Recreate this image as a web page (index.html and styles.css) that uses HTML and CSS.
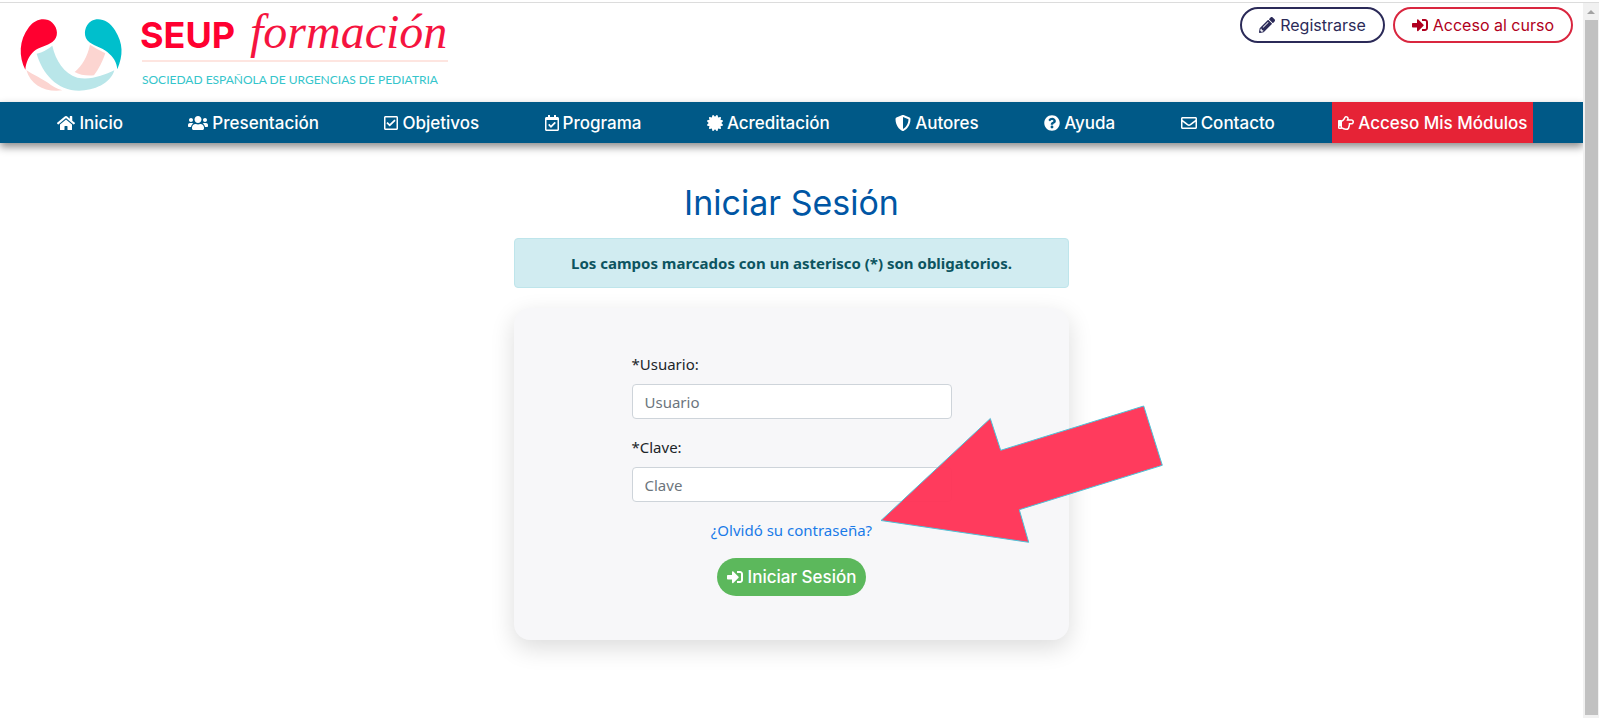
FILE: index.html
```html
<!DOCTYPE html>
<html lang="es">
<head>
<meta charset="utf-8">
<title>SEUP formación - Iniciar Sesión</title>
<meta name="viewport" content="width=device-width, initial-scale=1">
<link rel="stylesheet" href="styles.css">
</head>
<body>
<svg class="sprite" aria-hidden="true">
  <symbol id="pencil" viewBox="0 0 512 512"><path d="M497.9 142.1l-46.1 46.1c-4.7 4.7-12.3 4.7-17 0l-111-111c-4.7-4.7-4.7-12.3 0-17l46.1-46.1c18.7-18.7 49.1-18.7 67.9 0l60.1 60.1c18.8 18.7 18.8 49.1 0 67.9zM284.2 99.8L21.6 362.4.4 483.9c-2.9 16.4 11.4 30.6 27.8 27.8l121.5-21.3 262.6-262.6c4.7-4.7 4.7-12.3 0-17l-111-111c-4.8-4.7-12.4-4.7-17.1 0zM124.1 339.9c-5.5-5.5-5.5-14.3 0-19.8l154-154c5.5-5.5 14.3-5.5 19.8 0s5.5 14.3 0 19.8l-154 154c-5.5 5.5-14.3 5.5-19.8 0zM88 424h48v36.3l-64.5 11.3-31.1-31.1L51.7 376H88v48z"/></symbol>
  <symbol id="signin" viewBox="0 0 512 512"><path d="M416 448h-84c-6.600 0-12-5.400-12-12v-40c0-6.600 5.400-12 12-12h84c17.700 0 32-14.300 32-32V160c0-17.700-14.300-32-32-32h-84c-6.600 0-12-5.400-12-12V76c0-6.600 5.400-12 12-12h84c53 0 96 43 96 96v192c0 53-43 96-96 96zm-47-201L201 79c-15-15-41-4.500-41 17v96H24c-13.300 0-24 10.700-24 24v96c0 13.300 10.700 24 24 24h136v96c0 21.500 26 32 41 17l168-168c9.300-9.400 9.300-24.600 0-34z"/></symbol>
  <symbol id="home" viewBox="0 0 576 512"><path d="M280.37 148.26L96 300.11V464a16 16 0 0 0 16 16l112.06-.29a16 16 0 0 0 15.92-16V368a16 16 0 0 1 16-16h64a16 16 0 0 1 16 16v95.64a16 16 0 0 0 16 16.05L464 480a16 16 0 0 0 16-16V300L295.67 148.26a12.19 12.19 0 0 0-15.3 0zM571.6 251.47L488 182.56V44.05a12 12 0 0 0-12-12h-56a12 12 0 0 0-12 12v72.61L318.47 43a48 48 0 0 0-61 0L4.34 251.47a12 12 0 0 0-1.6 16.9l25.5 31A12 12 0 0 0 45.15 301l235.22-193.74a12.19 12.19 0 0 1 15.3 0L530.9 301a12 12 0 0 0 16.9-1.6l25.5-31a12 12 0 0 0-1.7-16.93z"/></symbol>
  <symbol id="users" viewBox="0 0 640 512"><path d="M96 224c35.3 0 64-28.7 64-64s-28.7-64-64-64-64 28.7-64 64 28.7 64 64 64zm448 0c35.3 0 64-28.7 64-64s-28.7-64-64-64-64 28.7-64 64 28.7 64 64 64zm32 32h-64c-17.6 0-33.500 7.100-45.100 18.600 40.300 22.100 68.900 62 75.100 109.400h66c17.700 0 32-14.300 32-32v-32c0-35.300-28.700-64-64-64zm-256 0c61.900 0 112-50.100 112-112S381.900 32 320 32 208 82.100 208 144s50.100 112 112 112zm76.800 32h-8.300c-20.800 10-43.900 16-68.500 16s-47.600-6-68.500-16h-8.300C179.600 288 128 339.600 128 403.200V432c0 26.500 21.500 48 48 48h288c26.500 0 48-21.500 48-48v-28.800c0-63.600-51.600-115.200-115.200-115.200zm-223.700-13.400C161.500 263.100 145.600 256 128 256H64c-35.300 0-64 28.700-64 64v32c0 17.700 14.300 32 32 32h65.900c6.300-47.400 34.900-87.300 75.200-109.400z"/></symbol>
  <symbol id="check" viewBox="0 0 448 512"><path d="M400 32H48C21.490 32 0 53.490 0 80v352c0 26.510 21.490 48 48 48h352c26.510 0 48-21.490 48-48V80c0-26.510-21.490-48-48-48zm0 400H48V80h352v352zm-35.864-241.724L191.547 361.480c-4.705 4.667-12.303 4.637-16.970-.068l-90.781-91.516c-4.667-4.705-4.637-12.303.069-16.971l22.719-22.536c4.705-4.667 12.303-4.637 16.970.069l59.792 60.277 141.352-140.216c4.705-4.667 12.303-4.637 16.970.068l22.536 22.718c4.667 4.706 4.637 12.304-.068 16.971z"/></symbol>
  <symbol id="calendar" viewBox="0 0 448 512"><path d="M400 64h-48V12c0-6.627-5.373-12-12-12h-40c-6.627 0-12 5.373-12 12v52H160V12c0-6.627-5.373-12-12-12h-40c-6.627 0-12 5.373-12 12v52H48C21.490 64 0 85.490 0 112v352c0 26.510 21.490 48 48 48h352c26.510 0 48-21.490 48-48V112c0-26.510-21.490-48-48-48zm-6 400H54a6 6 0 0 1-6-6V160h352v298a6 6 0 0 1-6 6zm-52.849-200.650L198.842 404.519c-4.705 4.667-12.303 4.637-16.971-.068l-75.091-75.699c-4.667-4.705-4.637-12.303.068-16.971l22.719-22.536c4.705-4.667 12.303-4.637 16.970.069l44.104 44.461 111.072-110.181c4.705-4.667 12.303-4.637 16.971.068l22.536 22.718c4.667 4.705 4.636 12.303-.069 16.970z"/></symbol>
  <symbol id="certificate" viewBox="0 0 512 512"><path d="M458.622 255.920l45.985-45.005c13.708-12.977 7.316-36.039-10.664-40.339l-62.650-15.990 17.661-62.015c4.991-17.838-11.829-34.663-29.661-29.671l-61.994 17.667-15.984-62.671C337.085.197 313.765-6.276 300.990 7.228L256 53.570 211.011 7.229c-12.630-13.351-36.047-7.234-40.325 10.668l-15.984 62.671-61.995-17.667C74.870 57.907 58.056 74.738 63.046 92.572l17.661 62.015-62.650 15.990C.069 174.878-6.310 197.944 7.392 210.915l45.985 45.005-45.985 45.004c-13.708 12.977-7.316 36.039 10.664 40.339l62.650 15.990-17.661 62.015c-4.991 17.838 11.829 34.663 29.661 29.671l61.994-17.667 15.984 62.671c4.439 18.575 27.696 24.018 40.325 10.668L256 458.610l44.989 46.001c12.500 13.488 35.987 7.486 40.325-10.668l15.984-62.671 61.994 17.667c17.836 4.994 34.651-11.837 29.661-29.671l-17.661-62.015 62.650-15.990c17.987-4.302 24.366-27.367 10.664-40.339l-45.984-45.004z"/></symbol>
  <symbol id="shield" viewBox="0 0 512 512"><path d="M466.500 83.700l-192-80a48.150 48.150 0 0 0-36.900 0l-192 80C27.700 91.100 16 108.600 16 128c0 198.500 114.500 335.700 221.500 380.300 11.800 4.900 25.100 4.900 36.900 0C360.100 472.600 496 349.300 496 128c0-19.400-11.700-36.900-29.500-44.300zM256.100 446.300l-.1-381 175.900 73.300c-3.300 151.400-82.100 261.100-175.800 307.700z"/></symbol>
  <symbol id="question" viewBox="0 0 512 512"><path d="M504 256c0 136.997-111.043 248-248 248S8 392.997 8 256C8 119.083 119.043 8 256 8s248 111.083 248 248zM262.655 90c-54.497 0-89.255 22.957-116.549 63.758-3.536 5.286-2.353 12.415 2.715 16.258l34.699 26.310c5.205 3.947 12.621 3.008 16.665-2.122 17.864-22.658 30.113-35.797 57.303-35.797 20.429 0 45.698 13.148 45.698 32.958 0 14.976-12.363 22.667-32.534 33.976C247.128 238.528 216 254.941 216 296v4c0 6.627 5.373 12 12 12h56c6.627 0 12-5.373 12-12v-1.333c0-28.462 83.186-29.647 83.186-106.667 0-58.002-60.165-102-116.531-102zM256 338c-25.365 0-46 20.635-46 46 0 25.364 20.635 46 46 46s46-20.636 46-46c0-25.365-20.635-46-46-46z"/></symbol>
  <symbol id="envelope" viewBox="0 0 512 512"><path d="M464 64H48C21.490 64 0 85.490 0 112v288c0 26.510 21.490 48 48 48h416c26.510 0 48-21.490 48-48V112c0-26.510-21.490-48-48-48zm0 48v40.805c-22.422 18.259-58.168 46.651-134.587 106.490-16.841 13.247-50.201 45.072-73.413 44.701-23.208.375-56.579-31.459-73.413-44.701C106.180 199.465 70.425 171.067 48 152.805V112h416zM48 400V214.398c22.914 18.251 55.409 43.862 104.938 82.646 21.857 17.205 60.134 55.186 103.062 54.955 42.717.231 80.509-37.199 103.053-54.947 49.528-38.783 82.032-64.401 104.947-82.653V400H48z"/></symbol>
  <symbol id="hand" viewBox="0 0 512 512"><path d="M428.800 137.600h-86.177a115.520 115.520 0 0 0 2.176-22.400c0-47.914-35.072-83.200-92-83.200-45.314 0-57.002 48.537-75.707 78.784-7.735 12.413-16.994 23.317-25.851 33.253l-.131.146-.129.148C135.662 161.807 127.764 168 120.800 168h-2.679c-5.747-4.952-13.536-8-22.120-8H32c-17.673 0-32 12.894-32 28.800v230.400C0 435.106 14.327 448 32 448h64c8.584 0 16.373-3.048 22.120-8h2.679c28.688 0 67.137 40 127.200 40h21.299c62.542 0 98.800-38.658 99.940-91.145 12.482-17.813 18.491-40.785 15.985-62.791A93.148 93.148 0 0 0 393.152 304H428.800c45.435 0 83.200-37.584 83.200-83.200 0-45.099-38.101-83.200-83.200-83.200zm0 118.400h-91.026c12.837 14.669 14.415 42.825-4.950 61.050 11.227 19.646 1.687 45.624-12.925 53.625 6.524 39.128-10.076 61.325-50.600 61.325H248c-45.491 0-77.210-35.913-120-39.676V215.571c25.239-2.964 42.966-21.222 59.075-39.596 11.275-12.650 21.725-25.300 30.799-39.875C232.355 112.712 244.006 80 252.800 80c23.375 0 44 8.800 44 35.200 0 35.200-26.400 53.075-26.400 70.400h158.400c18.425 0 35.200 16.500 35.200 35.200 0 18.975-16.225 35.200-35.200 35.200zM88 384c0 13.255-10.745 24-24 24s-24-10.745-24-24 10.745-24 24-24 24 10.745 24 24z"/></symbol>
</svg>
<div class="page">
  <header class="header">
    <a class="logo" href="#" aria-label="SEUP formación">
      <svg width="456" height="84" viewBox="14 10 456 84">
        <g transform="translate(14 12) scale(.3333)">
          <path fill="#fcd5d1" d="M228 98Q250 112 274 124C265 150 255 170 240 190Q205 193 182 180C205 160 220 135 228 98Z"/>
          <path fill="#fcd5d1" d="M37 174C60 190 85 200 103 213Q120 228 145 235C95 242 50 220 37 174Z"/>
          <path fill="#b9e6e9" d="M68 125Q95 118 115 101C125 145 150 185 190 197C230 205 270 190 301 175C290 215 240 236 195 236C130 236 85 185 68 125Z"/>
          <path fill="#ff0030" d="M34 173C14 135 14 85 45 45C65 20 95 15 115 32C132 48 135 75 115 90C100 102 75 105 60 118C45 132 36 150 34 173Z"/>
          <path fill="#00bfcc" d="M310 172C308 150 298 135 280 120C265 107 235 102 220 85C207 68 212 40 232 27C255 15 285 25 303 55C328 95 328 130 310 172Z"/>
        </g>
        <path fill="none" stroke="#fccbc1" d="M142 61H448"/>
        <text class="logo-name" x="140" y="48">SEUP</text>
        <text class="logo-script" x="250" y="48">formación</text>
        <text class="logo-sub" x="142" y="84">SOCIEDAD ESPAÑOLA DE URGENCIAS DE PEDIATRIA</text>
      </svg>
    </a>
    <div class="actions">
      <a class="pill pill-navy" href="#"><svg class="icon"><use href="#pencil"/></svg>Registrarse</a>
      <a class="pill pill-red" href="#"><svg class="icon"><use href="#signin"/></svg>Acceso al curso</a>
    </div>
  </header>
  <nav class="nav">
    <a href="#"><svg class="icon icon-home"><use href="#home"/></svg>Inicio</a>
    <a href="#"><svg class="icon icon-wide"><use href="#users"/></svg>Presentación</a>
    <a href="#"><svg class="icon icon-narrow"><use href="#check"/></svg>Objetivos</a>
    <a href="#"><svg class="icon icon-narrow"><use href="#calendar"/></svg>Programa</a>
    <a href="#"><svg class="icon"><use href="#certificate"/></svg>Acreditación</a>
    <a href="#"><svg class="icon"><use href="#shield"/></svg>Autores</a>
    <a href="#"><svg class="icon"><use href="#question"/></svg>Ayuda</a>
    <a href="#"><svg class="icon"><use href="#envelope"/></svg>Contacto</a>
    <a class="modules" href="#"><svg class="icon"><use href="#hand"/></svg>Acceso Mis Módulos</a>
  </nav>
  <main class="main">
    <h1 class="title">Iniciar Sesión</h1>
    <p class="alert">Los campos marcados con un asterisco (*) son obligatorios.</p>
    <div class="card">
      <form class="form">
        <label for="usuario">*Usuario:</label>
        <input id="usuario" type="text" placeholder="Usuario">
        <label for="clave">*Clave:</label>
        <input id="clave" type="password" placeholder="Clave">
        <a class="forgot" href="#">¿Olvidó su contraseña?</a>
        <button class="submit" type="button"><svg class="icon"><use href="#signin"/></svg>Iniciar Sesión</button>
      </form>
      <svg class="arrow" viewBox="0 0 287 144" aria-hidden="true"><path d="M3 118.500L112.300 16.500L122.700 48.300L265.700 4L284.300 63.300L141.300 107.700L150.700 140.300Z"/></svg>
    </div>
  </main>
</div>
<div class="scrollbar" aria-hidden="true"><span class="scroll-up"></span><span class="scroll-thumb"></span></div>
</body>
</html>
```
FILE: styles.css
```css
* { box-sizing: border-box; }

body {
  margin: 0;
  padding-top: 2px;
  min-height: 100vh;
  display: flex;
  background: #fff;
  color: #212529;
  font: 16px/24px "Noto Sans", "Open Sans", sans-serif;
}

a { color: inherit; text-decoration: none; }

.sprite { position: absolute; width: 0; height: 0; }

.icon { width: 16px; height: 16px; fill: currentColor; flex: none; }
.icon-home { width: 18px; }
.icon-wide { width: 20px; }
.icon-narrow { width: 14px; }

.page { flex: 1; border-top: 1px solid #dcdcdc; }

.header {
  display: flex;
  justify-content: space-between;
  align-items: flex-start;
  height: 99px;
  padding: 4px 10px 0 14px;
}

.logo { padding-top: 3px; }
.logo svg { display: block; overflow: visible; }
.logo-name { font: 700 36px Inter, sans-serif; fill: #ff0030; }
.logo-script { font: italic 48px "Liberation Serif", serif; fill: #f5143f; }
.logo-sub { font: 12px Lato, sans-serif; fill: #35c5cb; }

.actions { display: flex; gap: 8px; }

.pill {
  display: flex;
  align-items: center;
  gap: 5px;
  height: 36px;
  padding: 0 17px;
  border: 2px solid;
  border-radius: 18px;
  font-family: Inter, sans-serif;
}
.pill-navy { color: #2b2a58; }
.pill-red { color: #b00020; border-color: #d9263f; }

.nav {
  display: flex;
  justify-content: space-evenly;
  height: 41px;
  background: #005987;
  color: #fff;
  font: 500 17px/24px Inter, sans-serif;
  box-shadow: 0 4px 8px rgba(0, 0, 0, .45);
}
.nav a { display: flex; align-items: center; gap: 4px; padding: 0 8px; white-space: nowrap; }
.nav .modules { padding: 0 6px; background: #e62336; }

.main {
  display: flex;
  flex-direction: column;
  align-items: center;
  padding: 40px 16px 60px;
}

.title {
  margin: 0 0 15px;
  color: #0056a4;
  font: 400 34px/40px Inter, sans-serif;
}

.alert {
  width: 100%;
  max-width: 555px;
  margin: 0 0 20px;
  padding: 12px;
  border: 1px solid #bee5eb;
  border-radius: 4px;
  background: #d1ecf1;
  color: #0c5460;
  font-weight: 700;
  font-size: 15px;
  text-align: center;
}

.card {
  position: relative;
  width: 100%;
  max-width: 555px;
  padding: 44px 32px;
  border-radius: 16px;
  background: #f7f7f9;
  box-shadow: 0 8px 24px rgba(0, 0, 0, .14);
}

.form {
  display: flex;
  flex-direction: column;
  align-items: center;
  width: 100%;
  max-width: 320px;
  margin: 0 auto;
}
.form label { align-self: flex-start; margin-bottom: 8px; font-size: 15px; }
.form input {
  width: 100%;
  height: 35px;
  margin-bottom: 16px;
  padding: 0 12px;
  border: 1px solid #ced4da;
  border-radius: 4px;
  background: #fff;
  font: inherit;
  font-size: 15px;
}
.form input::placeholder { color: #6c757d; opacity: 1; }

.forgot { margin-bottom: 16px; color: #1a7be8; font-size: 15px; }

.submit {
  display: flex;
  align-items: center;
  gap: 5px;
  height: 38px;
  padding: 0 10px;
  border: 0;
  border-radius: 19px;
  background: #5cb85c;
  color: #fff;
  font: 500 17px/24px Inter, sans-serif;
}

.arrow {
  position: absolute;
  top: 94px;
  right: -96px;
  width: 287px;
  height: 144px;
  fill: #ff3356;
  fill-opacity: .96;
  stroke: #4cc3d9;
}

.scrollbar {
  display: flex;
  flex-direction: column;
  align-items: center;
  width: 16px;
  padding-bottom: 3px;
  border-top: 1px solid #dcdcdc;
  background: #f1f1f1;
}
.scroll-up {
  margin: 7px 0 6px;
  border: 4px solid transparent;
  border-top: 0;
  border-bottom-color: #a3a3a3;
}
.scroll-thumb { flex: 1; width: 13px; background: #c1c1c1; }
```
